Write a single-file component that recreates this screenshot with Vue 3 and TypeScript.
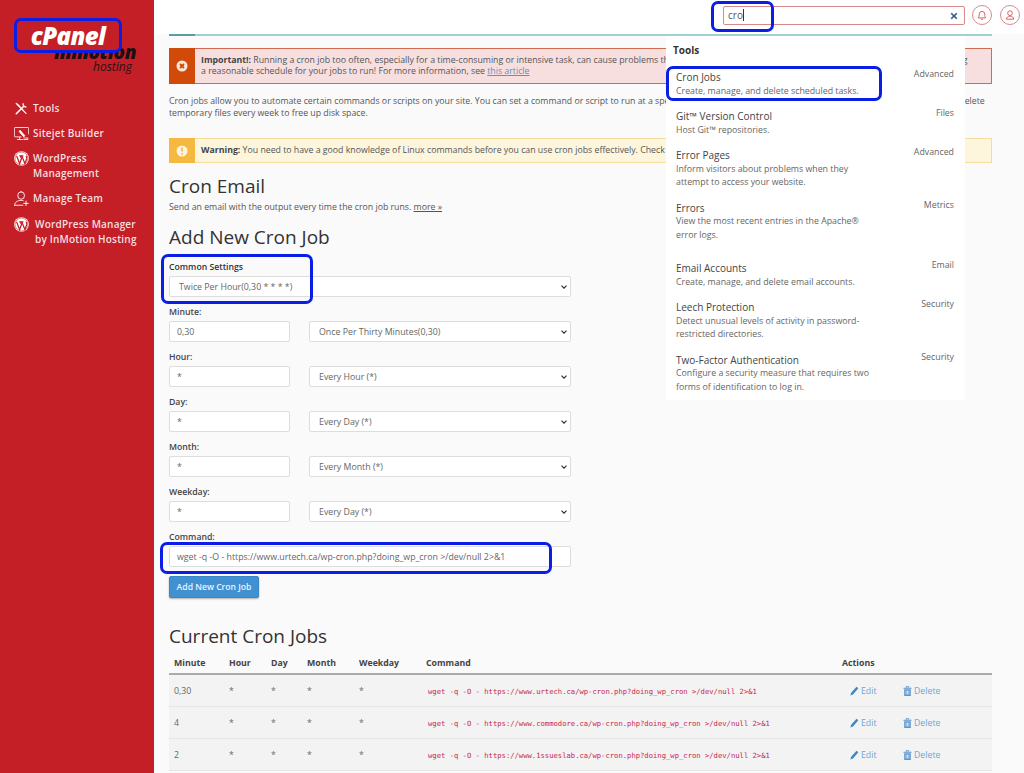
<script setup lang="ts">
type CronField = { label: string; value: string; option: string };
type Hit = { name: string; desc: string[]; group: string; gap: number };

const fields: CronField[] = [
  { label: "Minute:", value: "0,30", option: "Once Per Thirty Minutes(0,30)" },
  { label: "Hour:", value: "*", option: "Every Hour (*)" },
  { label: "Day:", value: "*", option: "Every Day (*)" },
  { label: "Month:", value: "*", option: "Every Month (*)" },
  { label: "Weekday:", value: "*", option: "Every Day (*)" },
];

const hits: Hit[] = [
  { name: "Cron Jobs", desc: ["Create, manage, and delete scheduled tasks."], group: "Advanced", gap: 0 },
  { name: "Git™ Version Control", desc: ["Host Git™ repositories."], group: "Files", gap: 0 },
  { name: "Error Pages", desc: ["Inform visitors about problems when they", "attempt to access your website."], group: "Advanced", gap: 0 },
  { name: "Errors", desc: ["View the most recent entries in the Apache®", "error logs."], group: "Metrics", gap: 8 },
  { name: "Email Accounts", desc: ["Create, manage, and delete email accounts."], group: "Email", gap: 0 },
  { name: "Leech Protection", desc: ["Detect unusual levels of activity in password-", "restricted directories."], group: "Security", gap: 0 },
  { name: "Two-Factor Authentication", desc: ["Configure a security measure that requires two", "forms of identification to log in."], group: "Security", gap: 0 },
];

const jobs = [
  { minute: "0,30", host: "www.urtech.ca" },
  { minute: "4", host: "www.commodore.ca" },
  { minute: "2", host: "www.1ssueslab.ca" },
];

const command = "wget -q -O - https://www.urtech.ca/wp-cron.php?doing_wp_cron >/dev/null 2>&1";
</script>

<template>
  <div class="page">
    <aside class="sidebar">
      <div class="logo">
        <span class="logo__inmotion">inmotion</span>
        <span class="logo__hosting">hosting</span>
      </div>
      <nav class="nav">
        <a class="nav__item">
          <svg class="nav__icon" viewBox="0 0 20 20" fill="none" stroke="#fff" stroke-linecap="round">
            <path d="M3 17 13 7" stroke-width="2" />
            <path d="M12 3.500a3.600 3.600 0 0 0 4.500 4.500l-2-.6-1.800-1.800z" fill="#fff" stroke-width="1" />
            <path d="M3 3l2 1 11.500 12.500-.5.5L4 5z" fill="#fff" stroke-width="1" />
          </svg>
          <span>Tools</span>
        </a>
        <a class="nav__item">
          <svg class="nav__icon" viewBox="0 0 20 20" fill="none" stroke="#fff" stroke-width="1.100">
            <path d="M10 14.500H1.500a1 1 0 0 1-1-1V3a1 1 0 0 1 1-1h17a1 1 0 0 1 1 1v8" />
            <path d="M4 18h8M7.500 14.500V18" />
            <path d="M8 5.500l6.500 7.500-1.500 1.500L7 7.500z" fill="#fff" />
            <path d="M12.500 16h6v2h-6" />
          </svg>
          <span>Sitejet Builder</span>
        </a>
        <a class="nav__item">
          <svg class="nav__icon" viewBox="0 0 20 20">
            <circle cx="10" cy="10" r="9.800" fill="#fff" />
            <circle cx="10" cy="10" r="8.600" fill="none" stroke="#c41f26" stroke-width=".7" />
            <path d="M3.500 6.500 7.500 17l2.500-7-1.500-3.500M7 6.500h5.500M10.500 6.500 14.500 17l2.500-7c.4-1.400-.2-2.500-1-3.500" fill="none" stroke="#c41f26" stroke-width="1.700" />
          </svg>
          <span>WordPress<br />Management</span>
        </a>
        <a class="nav__item">
          <svg class="nav__icon" viewBox="0 0 20 20" fill="none" stroke="#fff" stroke-width="1.200" stroke-linecap="round">
            <path d="M9.500 1a4.500 5 0 0 1 0 10 4.500 5 0 0 1 0-10z" />
            <path d="M.8 19c0-4 3.700-6.500 8.700-6.500 1 0 2 .1 2.800.4M.8 19h11" />
            <path d="M16 13.500v6M13 16.500h6" />
          </svg>
          <span>Manage Team</span>
        </a>
        <a class="nav__item nav__item--wide">
          <svg class="nav__icon" viewBox="0 0 20 20">
            <circle cx="10" cy="10" r="9.800" fill="#fff" />
            <circle cx="10" cy="10" r="8.600" fill="none" stroke="#c41f26" stroke-width=".7" />
            <path d="M3.500 6.500 7.500 17l2.500-7-1.500-3.500M7 6.500h5.500M10.500 6.500 14.500 17l2.500-7c.4-1.400-.2-2.500-1-3.500" fill="none" stroke="#c41f26" stroke-width="1.700" />
          </svg>
          <span>WordPress Manager<br />by InMotion Hosting</span>
        </a>
      </nav>
    </aside>

    <div class="main">
      <header class="topbar">
        <div class="search">
          <span>cro</span><i class="search__caret"></i>
          <svg class="search__clear" viewBox="0 0 10 10" stroke="#2c5c8f" stroke-width="2">
            <path d="M1.500 1.500l7 7M8.500 1.500l-7 7" />
          </svg>
        </div>
        <button class="round">
          <svg viewBox="0 0 12 12" fill="none" stroke="#d0585c" stroke-width="1.100">
            <path d="M1.500 9.500c1-1 1.200-2.500 1.200-4.500a3.300 3.300 0 0 1 6.600 0c0 2 .2 3.500 1.200 4.500z" />
            <path d="M4.800 11h2.400" />
          </svg>
        </button>
        <button class="round">
          <svg viewBox="0 0 12 12" fill="none" stroke="#d0585c" stroke-width="1.100">
            <circle cx="6" cy="3.800" r="2.800" />
            <path d="M1.500 11c.5-2.500 2.200-3.600 4.500-3.600s4 1.100 4.500 3.600z" />
          </svg>
        </button>
      </header>

      <main class="content">
        <div class="rule"></div>

        <div class="alert alert--danger">
          <div class="alert__icon">
            <svg viewBox="0 0 12 12">
              <circle cx="6" cy="6" r="5.500" fill="#fbe6dc" />
              <path d="M4 4l4 4M8 4l-4 4" stroke="#d04a0a" stroke-width="1.800" />
            </svg>
          </div>
          <p><b>Important!:</b> Running a cron job too often, especially for a time-consuming or intensive task, can cause problems that slow down your website or server. Please make sure to allow for a long<br />a reasonable schedule for your jobs to run! For more information, see <a class="link">this article</a></p>
        </div>

        <p class="intro">Cron jobs allow you to automate certain commands or scripts on your site. You can set a command or script to run at a specific time every day, week, etc. For example, you could set a cron job to delete<br />temporary files every week to free up disk space.</p>

        <div class="alert alert--warning">
          <div class="alert__icon">
            <svg viewBox="0 0 12 12">
              <circle cx="6" cy="6" r="5.500" fill="#fdf3d8" />
              <path d="M6 2.800v3.800M6 8v1.400" stroke="#f0b73f" stroke-width="1.600" />
            </svg>
          </div>
          <p><b>Warning:</b> You need to have a good knowledge of Linux commands before you can use cron jobs effectively. Check your commands first.</p>
        </div>

        <h2 class="heading heading--email">Cron Email</h2>
        <p class="note">Send an email with the output every time the cron job runs. <a class="more">more »</a></p>

        <h2 class="heading heading--add">Add New Cron Job</h2>

        <form class="form" @submit.prevent>
          <label class="form__label form__label--strong">Common Settings</label>
          <select class="control control--select control--common">
            <option>Twice Per Hour(0,30 * * * *)</option>
          </select>

          <div v-for="field in fields" :key="field.label" class="field">
            <label class="form__label">{{ field.label }}</label>
            <div class="field__row">
              <input class="control" :value="field.value" />
              <select class="control control--select">
                <option>{{ field.option }}</option>
              </select>
            </div>
          </div>

          <div class="field">
            <label class="form__label">Command:</label>
            <input class="control control--command" :value="command" />
          </div>

          <button class="submit">Add New Cron Job</button>
        </form>

        <h2 class="heading heading--current">Current Cron Jobs</h2>
        <table class="jobs">
          <colgroup>
            <col class="col-minute" /><col class="col-hour" /><col class="col-day" />
            <col class="col-month" /><col class="col-weekday" /><col class="col-command" /><col />
          </colgroup>
          <thead>
            <tr>
              <th>Minute</th><th>Hour</th><th>Day</th><th>Month</th><th>Weekday</th><th>Command</th><th>Actions</th>
            </tr>
          </thead>
          <tbody>
            <tr v-for="job in jobs" :key="job.host">
              <td>{{ job.minute }}</td><td>*</td><td>*</td><td>*</td><td>*</td>
              <td><code>wget -q -O - https://{{ job.host }}/wp-cron.php?doing_wp_cron &gt;/dev/null 2&gt;&amp;1</code></td>
              <td>
                <div class="actions">
                  <a class="action">
                    <svg viewBox="0 0 10 11" fill="#3d85c6"><path d="M.5 10.500l.8-3L7.300.7l2 1.800-6 6.800z" /></svg>
                    Edit
                  </a>
                  <a class="action">
                    <svg viewBox="0 0 10 11" fill="#5b97cc"><path d="M.5 2h9v1h-9zM3.200.3h3.600V2H6V1H4v1h-.8zM1.300 3.500h7.400V11H1.300zM3 5v4.500h.8V5zm1.600 0v4.500h.8V5zm1.600 0v4.500H7V5z" fill-rule="evenodd" /></svg>
                    Delete
                  </a>
                </div>
              </td>
            </tr>
          </tbody>
        </table>
      </main>
    </div>

    <!-- search results hang over the page -->
    <section class="results">
      <h3 class="results__title">Tools</h3>
      <div v-for="hit in hits" :key="hit.name" class="hit" :style="{ marginBottom: hit.gap + 'px' }">
        <div>
          <div class="hit__name">{{ hit.name }}</div>
          <div v-for="line in hit.desc" :key="line" class="hit__desc">{{ line }}</div>
        </div>
        <span class="hit__group">{{ hit.group }}</span>
      </div>
    </section>

    <!-- blue markup boxes drawn over the screenshot; the logo one is filled and covers the top of the inmotion wordmark -->
    <div class="mark mark--logo"><span class="logo__cpanel">cPanel</span></div>
    <i class="mark mark--search"></i>
    <i class="mark mark--hit"></i>
    <i class="mark mark--common"></i>
    <i class="mark mark--command"></i>
  </div>
</template>

<style>
html,
body {
  margin: 0;
  background: #fafafa;
}
</style>

<style scoped>
.page {
  position: relative;
  display: flex;
  width: 1024px;
  height: 773px;
  overflow: hidden;
  font-family: "Open Sans", "Liberation Sans", sans-serif;
  font-size: 8.75px;
  color: #555;
}

/* sidebar */
.sidebar {
  flex: 0 0 154px;
  background: #c41f26;
  padding-left: 14px;
  box-sizing: border-box;
}

.logo {
  position: relative;
  height: 101px;
}

.logo__cpanel {
  font: italic 800 24px "Open Sans", sans-serif;
  letter-spacing: -0.6px;
  color: #fff;
}

.logo__inmotion {
  position: absolute;
  top: 39px;
  left: 40px;
  font: italic 800 19px "Open Sans", sans-serif;
  letter-spacing: -0.4px;
  color: #1c1012;
}

.logo__hosting {
  position: absolute;
  top: 58px;
  left: 79px;
  font: italic 400 12px "Open Sans", sans-serif;
  color: #2a1215;
}

.nav {
  display: flex;
  flex-direction: column;
  gap: 10px;
}

.nav__item {
  display: flex;
  gap: 4px;
  font-size: 10px;
  font-weight: 600;
  line-height: 15px;
  letter-spacing: 0.2px;
  color: #f6dfe0;
}

.nav__item--wide {
  gap: 6px;
  margin-top: 1px;
}

.nav__icon {
  flex: 0 0 15px;
  width: 15px;
  height: 15px;
}

/* top bar and page */
.main {
  flex: 1;
  min-width: 0;
  display: flex;
  flex-direction: column;
}

.topbar {
  flex: 0 0 34px;
  display: flex;
  align-items: center;
  justify-content: flex-end;
  gap: 8px;
  padding: 0 4px 4px 0;
  background: #fff;
  box-sizing: border-box;
}

.search {
  position: relative;
  display: flex;
  align-items: center;
  width: 242px;
  height: 19px;
  margin-right: -1px;
  padding-left: 4px;
  box-sizing: border-box;
  border: 1px solid #d9888b;
  border-radius: 2px;
  background: #fff;
  font-size: 10px;
  color: #555;
}

.search__caret {
  width: 1px;
  height: 12px;
  background: #333;
}

.search__clear {
  position: absolute;
  right: 6px;
  top: 5px;
  width: 8px;
  height: 8px;
}

.round {
  width: 20px;
  height: 20px;
  padding: 4px;
  border: 1px solid #d9888b;
  border-radius: 50%;
  background: #fff;
  box-sizing: border-box;
}

.round svg {
  display: block;
  width: 100%;
  height: 100%;
}

.content {
  flex: 1;
  padding: 0 32px 0 15px;
}

.rule {
  height: 2px;
  background: linear-gradient(to right, #5a9ba8 26px, #9ed0d3 26px);
}

.alert {
  display: flex;
  align-items: center;
  box-sizing: border-box;
  border-style: solid;
  border-width: 1px 1px 1px 0;
}

.alert p {
  margin: 0;
  padding-left: 6px;
  line-height: 11.500px;
  white-space: nowrap;
  overflow: hidden;
  flex: 1;
  min-width: 0;
}

.alert b {
  font-weight: 700;
  color: #444;
}

.alert__icon {
  align-self: stretch;
  flex: 0 0 26px;
  display: flex;
  align-items: center;
  justify-content: center;
  margin: -1px 0;
}

.alert__icon svg {
  width: 12px;
  height: 12px;
}

.alert--danger {
  height: 36px;
  margin-top: 12px;
  background: #f7dfdf;
  border-color: #d06a50;
}

.alert--danger .alert__icon {
  background: #d04a0a;
}

.alert--warning {
  height: 25px;
  margin-top: 18px;
  background: #fdf6dd;
  border-color: #f5dc9c;
}

.alert--warning .alert__icon {
  background: #f5b942;
}

.link {
  color: #5f8fc4;
  text-decoration: underline;
}

.intro {
  margin: 12px 0 0;
  line-height: 11.700px;
  white-space: nowrap;
  height: 24px;
}

.heading {
  margin: 0;
  font-size: 19px;
  font-weight: 400;
  line-height: 26px;
  color: #333;
}

.heading--email {
  margin-top: 10px;
}

.note {
  margin: 2px 0 0;
  line-height: 13px;
}

.more {
  text-decoration: underline;
}

.heading--add {
  margin-top: 10px;
}

/* cron form */
.form {
  margin-top: 11px;
  width: 402px;
}

.form__label {
  display: block;
  height: 15px;
  font-size: 8.700px;
  line-height: 12.500px;
  font-weight: 600;
  color: #444;
}

.form__label--strong {
  line-height: 13px;
  color: #333;
}

.control {
  height: 21px;
  box-sizing: border-box;
  padding: 0 7px;
  border: 1px solid #ddd;
  border-radius: 2px;
  background-color: #fff;
  font-family: inherit;
  font-size: 8.800px;
  color: #666;
  outline: none;
}

.control--select {
  appearance: none;
  padding-left: 9px;
  background-image: url("data:image/svg+xml,%3Csvg xmlns='http://www.w3.org/2000/svg' viewBox='0 0 6 4'%3E%3Cpath d='M.5.7 3 3.200 5.500.7' fill='none' stroke='%23333' stroke-width='1.200'/%3E%3C/svg%3E");
  background-repeat: no-repeat;
  background-position: right 3px center;
  background-size: 6px 4px;
}

.control--common {
  display: block;
  width: 100%;
}

.field {
  margin-top: 9px;
}

.field__row {
  display: grid;
  grid-template-columns: 121px 262px;
  gap: 19px;
}

.field__row .control {
  width: 100%;
}

.control--command {
  display: block;
  width: 100%;
}

.submit {
  display: block;
  margin-top: 9px;
  width: 90px;
  height: 22px;
  padding: 0;
  border: 1px solid #3a85c6;
  border-radius: 2px;
  background: #4190d2;
  box-shadow: 0 1px 2px rgba(0, 0, 0, 0.3);
  font-family: inherit;
  font-size: 8.600px;
  font-weight: 600;
  color: #eaf3fa;
}

.heading--current {
  margin-top: 25px;
}

/* jobs table */
.jobs {
  width: 100%;
  margin-top: 3px;
  table-layout: fixed;
  border-collapse: collapse;
}

.col-minute {
  width: 55px;
}

.col-hour {
  width: 42px;
}

.col-day {
  width: 36px;
}

.col-month {
  width: 52px;
}

.col-weekday {
  width: 67px;
}

.col-command {
  width: 416px;
}

.jobs th {
  height: 21px;
  padding: 0 5px;
  border-bottom: 2px solid #aaa;
  text-align: left;
  font-weight: 700;
  color: #444;
}

.jobs td {
  height: 31px;
  padding: 0 5px;
  background: #f3f3f3;
  border-bottom: 1px solid #e6e6e6;
  color: #666;
}

.jobs code {
  padding-left: 2px;
  font-family: "DejaVu Sans Mono", "Liberation Mono", monospace;
  font-size: 7.200px;
  color: #c7254e;
}

.actions {
  display: flex;
  margin-left: 8px;
}

.action {
  display: flex;
  align-items: center;
  gap: 2px;
  width: 53px;
  color: #6ea5d6;
}

.action svg {
  width: 9px;
  height: 10px;
}

/* search results */
.results {
  position: absolute;
  top: 36px;
  left: 666px;
  width: 299px;
  height: 364px;
  box-sizing: border-box;
  padding: 7px 7px 0 7px;
  background: #fff;
}

.results__title {
  margin: 0;
  height: 28px;
  font-size: 10px;
  font-weight: 700;
  line-height: 14px;
  color: #333;
}

.hit {
  display: flex;
  justify-content: space-between;
  padding: 0 4px 12.500px 3px;
}

.hit__name {
  font-size: 10px;
  line-height: 13.500px;
  color: #444;
}

.hit__desc {
  font-size: 8.800px;
  line-height: 13.200px;
  color: #666;
}

.hit__group {
  margin-top: -3px;
  font-size: 8.800px;
  line-height: 13px;
  color: #666;
}

/* blue markup */
.mark {
  position: absolute;
  box-sizing: border-box;
  border: 3.500px solid #0a1ee6;
  border-radius: 7px;
}

.mark--logo {
  top: 18px;
  left: 14px;
  width: 108px;
  height: 35px;
  display: flex;
  align-items: center;
  justify-content: center;
  background: #c41f26;
}

.mark--search {
  top: 1px;
  left: 711px;
  width: 63px;
  height: 31px;
}

.mark--hit {
  top: 66px;
  left: 666px;
  width: 216px;
  height: 35px;
}

.mark--common {
  top: 254px;
  left: 161px;
  width: 152px;
  height: 50px;
}

.mark--command {
  top: 542px;
  left: 160px;
  width: 392px;
  height: 32px;
}
</style>
